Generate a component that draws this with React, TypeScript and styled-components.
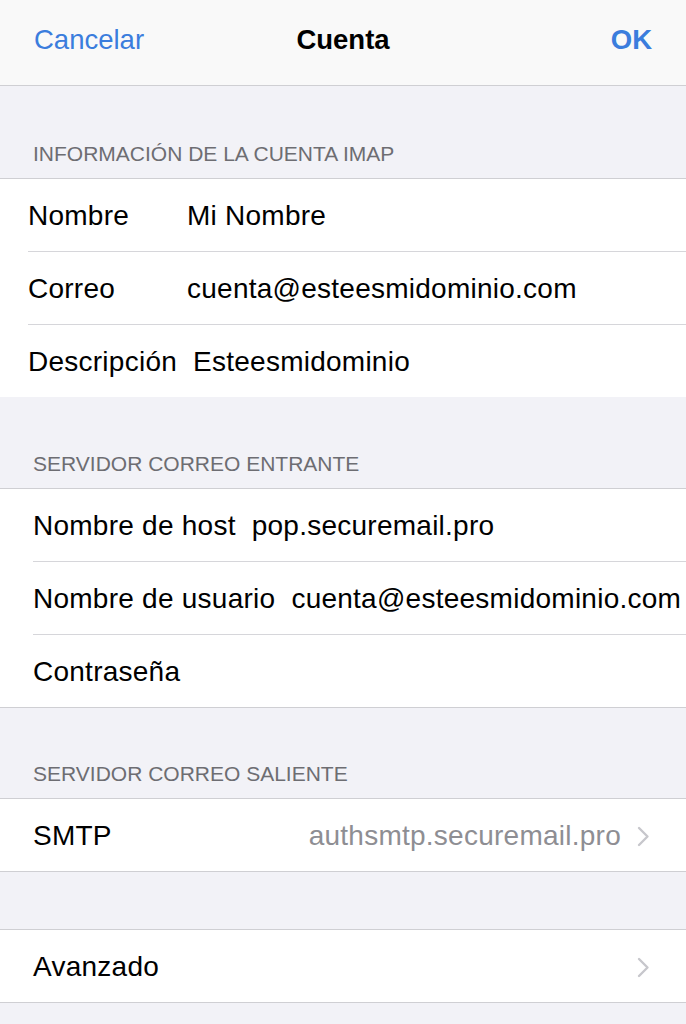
import React from "react";
import styled, { createGlobalStyle } from "styled-components";

const Global = createGlobalStyle`
  html, body { margin: 0; padding: 0; background: #f2f2f7; }
  body { font-family: "Liberation Sans", Arial, sans-serif; -webkit-font-smoothing: antialiased; }
  * { box-sizing: border-box; }
`;

const Page = styled.div`
  width: 686px;
  min-height: 1024px;
  background: #f2f2f7;
  display: flex;
  flex-direction: column;
  overflow: hidden;
`;

const Nav = styled.div`
  height: 86px;
  background: #f9f9f9;
  border-bottom: 1px solid #cfcfd3;
  display: grid;
  grid-template-columns: 1fr auto 1fr;
  align-items: center;
  padding: 0 34px 6px 34px;
  font-size: 27.5px;
`;

const NavButton = styled.span<{ $align: "left" | "right"; $bold?: boolean }>`
  color: #3b7ddd;
  text-align: ${(p) => p.$align};
  font-weight: ${(p) => (p.$bold ? 700 : 400)};
`;

const NavTitle = styled.span`
  color: #000;
  font-weight: 700;
`;

const SectionHeader = styled.div<{ $h: number }>`
  height: ${(p) => p.$h}px;
  display: flex;
  align-items: flex-end;
  padding: 0 33px 12px 33px;
  font-size: 21px;
  line-height: 25px;
  color: #6d6d72;
`;

const Spacer = styled.div<{ $h: number }>`
  height: ${(p) => p.$h}px;
`;

const Group = styled.div<{ $bottom?: boolean }>`
  background: #fff;
  border-top: 1px solid #cfcfd3;
  border-bottom: ${(p) => (p.$bottom ? "1px solid #cfcfd3" : "none")};
`;

const Row = styled.div<{ $inset: number; $last?: boolean }>`
  margin-left: ${(p) => p.$inset}px;
  height: ${(p) => (p.$last ? 72 : 73)}px;
  border-bottom: ${(p) => (p.$last ? "none" : "1px solid #d6d6da")};
  display: flex;
  align-items: center;
  padding-top: 2px;
  font-size: 28px;
  letter-spacing: 0.25px;
  color: #000;
  white-space: nowrap;
`;

const Label = styled.span<{ $min?: number }>`
  flex-shrink: 0;
  min-width: ${(p) => p.$min ?? 0}px;
  margin-right: 16px;
`;

const Value = styled.span`
  flex-shrink: 0;
  color: #000;
`;

const Detail = styled.span`
  margin-left: auto;
  margin-right: 36px;
  color: #8e8e93;
  display: flex;
  align-items: center;
  gap: 16px;
`;

const Chevron = () => (
  <svg width="13" height="21" viewBox="0 0 13 21" style={{ display: "block" }}>
    <polyline points="2,2 10.5,10.5 2,19" fill="none" stroke="#c7c7cc" strokeWidth="2.4" strokeLinecap="round" strokeLinejoin="round" />
  </svg>
);

export default function App() {
  return (
    <Page>
      <Global />
      <Nav>
        <NavButton $align="left">Cancelar</NavButton>
        <NavTitle>Cuenta</NavTitle>
        <NavButton $align="right" $bold>OK</NavButton>
      </Nav>

      <SectionHeader $h={92}>INFORMACIÓN DE LA CUENTA IMAP</SectionHeader>
      <Group>
        <Row $inset={28}>
          <Label $min={143}>Nombre</Label>
          <Value>Mi Nombre</Value>
        </Row>
        <Row $inset={28}>
          <Label $min={143}>Correo</Label>
          <Value>cuenta@esteesmidominio.com</Value>
        </Row>
        <Row $inset={28} $last>
          <Label $min={143}>Descripción</Label>
          <Value>Esteesmidominio</Value>
        </Row>
      </Group>

      <SectionHeader $h={91}>SERVIDOR CORREO ENTRANTE</SectionHeader>
      <Group $bottom>
        <Row $inset={33}>
          <Label>Nombre de host</Label>
          <Value>pop.securemail.pro</Value>
        </Row>
        <Row $inset={33}>
          <Label>Nombre de usuario</Label>
          <Value>cuenta@esteesmidominio.com</Value>
        </Row>
        <Row $inset={33} $last>
          <Label>Contraseña</Label>
        </Row>
      </Group>

      <SectionHeader $h={90}>SERVIDOR CORREO SALIENTE</SectionHeader>
      <Group $bottom>
        <Row $inset={33} $last>
          <Label>SMTP</Label>
          <Detail>
            authsmtp.securemail.pro
            <Chevron />
          </Detail>
        </Row>
      </Group>

      <Spacer $h={57} />
      <Group $bottom>
        <Row $inset={33} $last>
          <Label>Avanzado</Label>
          <Detail>
            <Chevron />
          </Detail>
        </Row>
      </Group>
    </Page>
  );
}
